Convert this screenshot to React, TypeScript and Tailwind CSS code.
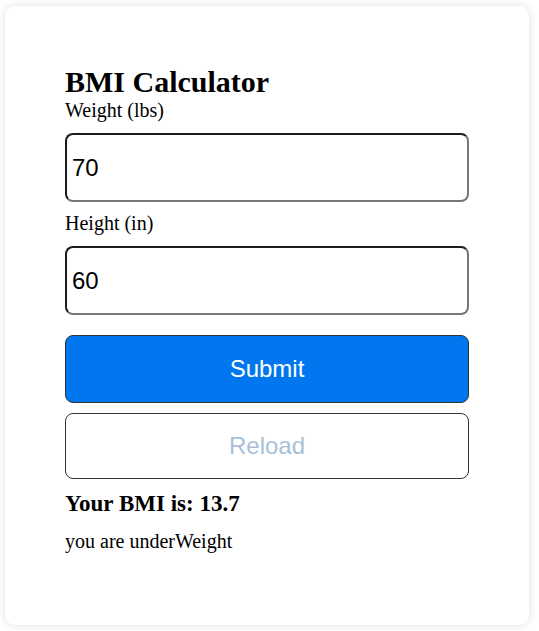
import React from "react";

function Field({ label, value, labelClass }: { label: string; value: string; labelClass: string }) {
  return (
    <>
      <label className={`block font-['Liberation_Serif',serif] text-[20px] leading-[24px] text-black ${labelClass}`}>
        {label}
      </label>
      <input
        type="text"
        defaultValue={value}
        className="mt-[11px] block h-[69px] w-full rounded-[8px] border-2 border-t-[#1c1c1c] border-l-[#1c1c1c] border-r-[#777777] border-b-[#777777] bg-white pl-[5px] font-['Liberation_Sans',Arial,sans-serif] text-[24px] text-black outline-none"
      />
    </>
  );
}

export default function App() {
  return (
    <div className="min-h-[631px] bg-white pl-[5px] pt-[6px]">
      <div className="flex h-[619px] w-[524px] flex-col rounded-[10px] bg-white px-[60px] pt-[60px] shadow-[0_0_10px_rgba(0,0,0,0.13)]">
        <h2 className="font-['Liberation_Serif',serif] text-[30px] font-bold leading-[32px] text-black">
          BMI Calculator
        </h2>
        <Field label="Weight (lbs)" value="70" labelClass="" />
        <Field label="Height (in)" value="60" labelClass="mt-[9px]" />
        <button className="mt-[20px] block h-[68px] w-full rounded-[8px] border border-[#333333] bg-[#0077ee] font-['Liberation_Sans',Arial,sans-serif] text-[24px] text-white">
          Submit
        </button>
        <button className="mt-[10px] block h-[66px] w-full rounded-[8px] border border-[#333333] bg-white font-['Liberation_Sans',Arial,sans-serif] text-[24px] text-[#a9bfd9]">
          Reload
        </button>
        <h3 className="mt-[11px] font-['Liberation_Serif',serif] text-[23px] font-bold leading-[28px] text-black">
          Your BMI is: 13.7
        </h3>
        <p className="mt-[11px] font-['Liberation_Serif',serif] text-[20px] leading-[24px] text-black">
          you are underWeight
        </p>
      </div>
    </div>
  );
}
